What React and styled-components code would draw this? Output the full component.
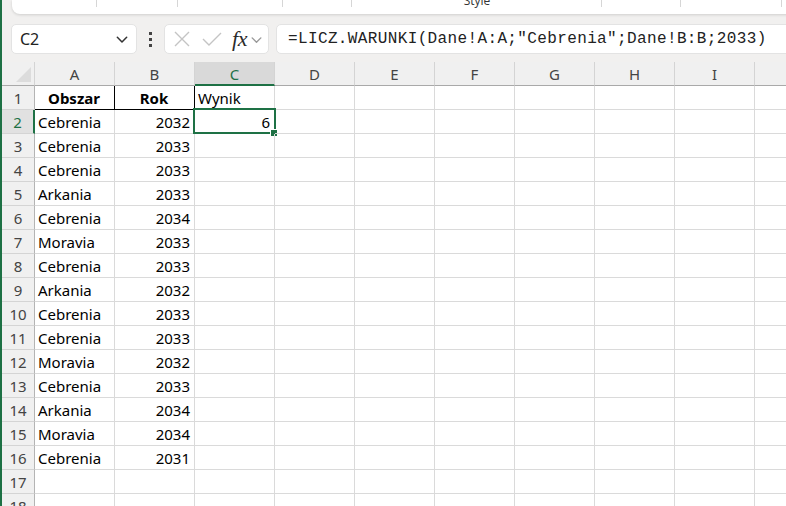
import { createGlobalStyle } from "styled-components"
import styled from "styled-components"

var GlobalStyle = createGlobalStyle`
    html, body {
        margin: 0;
        padding: 0;
        background: #f1f0ef;
        overflow: hidden;
    }
    * {
        box-sizing: border-box;
    }
`

var Window = styled.div`
    width: 786px;
    height: 506px;
    border-left: 2px solid #1e7145;
    display: flex;
    flex-direction: column;
    overflow: hidden;
    font-family: "Noto Sans", "Open Sans", sans-serif;
    & > * {
        flex-shrink: 0;
    }
`

var Ribbon = styled.div`
    height: 14px;
    margin-left: 10px;
    margin-right: -20px;
    background: #ffffff;
    border-bottom-left-radius: 8px;
    box-shadow: 0 1px 3px rgba(0, 0, 0, 0.14);
    display: flex;
    overflow: hidden;
`

var RibbonGroup = styled.div`
    position: relative;
    width: ${(props) => props.w}px;
    flex-shrink: 0;
    display: flex;
    justify-content: center;
    &::after {
        content: "";
        position: absolute;
        right: 0;
        top: 0;
        height: 7px;
        width: 1px;
        background: #d6d6d6;
    }
`

var RibbonLabel = styled.span`
    font-family: "Open Sans", "Noto Sans", sans-serif;
    font-size: 12px;
    line-height: 12px;
    margin-top: -5px;
    color: #333;
`

var FormulaRow = styled.div`
    display: flex;
    align-items: center;
    height: 30px;
    margin-top: 10px;
    margin-bottom: 8px;
    padding-left: 9px;
`

var Box = styled.div`
    height: 30px;
    background: #ffffff;
    border: 1px solid #e3e3e3;
    border-radius: 5px;
    display: flex;
    align-items: center;
    flex-shrink: 0;
`

var NameBox = styled(Box)`
    width: 126px;
    padding: 0 7px 0 8px;
    justify-content: space-between;
    font-family: "Noto Sans", sans-serif;
    font-size: 16px;
    color: #222;
`

var Dots = styled.div`
    width: 27px;
    display: flex;
    flex-direction: column;
    align-items: center;
    gap: 3px;
    span {
        width: 3px;
        height: 3px;
        background: #444;
    }
`

var FxBox = styled(Box)`
    width: 105px;
    padding: 0 3px 0 6px;
`

var FxLabel = styled.span`
    margin-left: 7px;
    font-family: "Liberation Serif", "DejaVu Serif", serif;
    font-style: italic;
    font-weight: 400;
    font-size: 22px;
    line-height: 22px;
    color: #2b2b2b;
    letter-spacing: -0.3px;
`

var IconSlot = styled.span`
    display: flex;
    margin-left: ${(props) => props.gap || 0}px;
`

var FormulaBox = styled(Box)`
    flex: 1;
    margin-left: 7px;
    margin-right: -12px;
    padding-left: 11px;
    font-family: "Liberation Mono", "DejaVu Sans Mono", monospace;
    font-size: 16px;
    letter-spacing: 0.37px;
    color: #222;
    white-space: nowrap;
`

var Grid = styled.div`
    display: grid;
    grid-template-columns: 33px repeat(10, 80px);
    grid-auto-rows: 24px;
    background: #ffffff;
    font-family: "Noto Sans", "Open Sans", sans-serif;
`

var ColHead = styled.div`
    background: ${(props) => (props.sel ? "#d9d9d9" : "#f0f0f0")};
    border-right: 1px solid #d4d4d4;
    border-bottom: ${(props) => (props.sel ? "2px solid #1e7145" : "1px solid #a9a9a9")};
    color: ${(props) => (props.sel ? "#1e7145" : "#444")};
    font-size: 15px;
    display: flex;
    align-items: center;
    justify-content: center;
    padding-top: ${(props) => (props.sel ? "1px" : "0")};
`

var Corner = styled.div`
    background: #f0f0f0;
    border-right: 1px solid #d4d4d4;
    border-bottom: 1px solid #a9a9a9;
    display: flex;
    align-items: flex-end;
    justify-content: flex-end;
    padding: 0 3px 3px 0;
`

var RowHead = styled.div`
    background: ${(props) => (props.sel ? "#e1e1e1" : "#f0f0f0")};
    border-right: ${(props) => (props.sel ? "2px solid #1e7145" : "1px solid #b4b4b4")};
    border-bottom: 1px solid #d4d4d4;
    color: ${(props) => (props.sel ? "#1e7145" : "#444")};
    font-size: 15px;
    display: flex;
    align-items: center;
    justify-content: center;
`

var Cell = styled.div`
    position: relative;
    border-right: 1px solid ${(props) => (props.boxed ? "#000" : "#dadada")};
    border-bottom: 1px solid ${(props) => (props.boxed ? "#000" : "#dadada")};
    padding: 0 4px 0 3px;
    font-size: 15px;
    color: #000;
    font-weight: ${(props) => (props.bold ? 700 : 400)};
    display: flex;
    align-items: center;
    justify-content: ${(props) =>
      props.align === "right" ? "flex-end" : props.align === "center" ? "center" : "flex-start"};
    white-space: nowrap;
`

var Selection = styled.div`
    position: absolute;
    left: -2px;
    top: -2px;
    width: 83px;
    height: 26px;
    border: 2px solid #1e7145;
    pointer-events: none;
`

var FillHandle = styled.div`
    position: absolute;
    right: -4px;
    bottom: -5px;
    width: 8px;
    height: 8px;
    background: #1e7145;
    border: 1px solid #ffffff;
`

var cols = ["A", "B", "C", "D", "E", "F", "G", "H", "I", "J"]

var data = [
  ["Cebrenia", 2032],
  ["Cebrenia", 2033],
  ["Cebrenia", 2033],
  ["Arkania", 2033],
  ["Cebrenia", 2034],
  ["Moravia", 2033],
  ["Cebrenia", 2033],
  ["Arkania", 2032],
  ["Cebrenia", 2033],
  ["Cebrenia", 2033],
  ["Moravia", 2032],
  ["Cebrenia", 2033],
  ["Arkania", 2034],
  ["Moravia", 2034],
  ["Cebrenia", 2031],
]

var ribbonGroups = [85, 81, 105, 69, 250, 79, 101, 60]

function Chevron(props) {
  return (
    <svg width={props.size} height={props.size} viewBox="0 0 12 12" fill="none">
      <path d="M2 4.5 L6 8.5 L10 4.5" stroke={props.color} strokeWidth="1.3" strokeLinecap="round" strokeLinejoin="round" />
    </svg>
  )
}

function renderRow(r) {
  var row = r === 1 ? ["Obszar", "Rok", "Wynik"] : data[r - 2] || ["", ""]
  var cells = []
  for (var c = 0; c < cols.length; c++) {
    var key = r + "-" + c
    if (r === 1 && c < 2) {
      cells.push(
        <Cell key={key} boxed bold align="center">
          {row[c]}
        </Cell>
      )
    } else if (r === 1 && c === 2) {
      cells.push(<Cell key={key}>{row[2]}</Cell>)
    } else if (c === 0) {
      cells.push(<Cell key={key}>{row[0]}</Cell>)
    } else if (c === 1) {
      cells.push(
        <Cell key={key} align="right">
          {row[1]}
        </Cell>
      )
    } else if (r === 2 && c === 2) {
      cells.push(
        <Cell key={key} align="right">
          6
          <Selection>
            <FillHandle />
          </Selection>
        </Cell>
      )
    } else {
      cells.push(<Cell key={key} />)
    }
  }
  return [
    <RowHead key={"h" + r} sel={r === 2}>
      {r}
    </RowHead>,
    ...cells,
  ]
}

export default function App() {
  var rows = []
  for (var r = 1; r <= 18; r++) {
    rows.push(...renderRow(r))
  }

  return (
    <Window>
      <GlobalStyle />
      <Ribbon>
        {ribbonGroups.map((w, i) => (
          <RibbonGroup key={i} w={w}>
            {i === 4 && <RibbonLabel>Style</RibbonLabel>}
          </RibbonGroup>
        ))}
      </Ribbon>

      <FormulaRow>
        <NameBox>
          <span>C2</span>
          <Chevron size={14} color="#333" />
        </NameBox>
        <Dots>
          <span />
          <span />
          <span />
        </Dots>
        <FxBox>
          <svg width="22" height="22" viewBox="0 0 22 22" fill="none">
            <path d="M4 4 L18 18 M18 4 L4 18" stroke="#c4c4c4" strokeWidth="1.4" />
          </svg>
          <IconSlot gap={6}>
            <svg width="26" height="22" viewBox="0 0 26 22" fill="none">
              <path d="M4 11 L10 17 L22 5" stroke="#c4c4c4" strokeWidth="1.4" />
            </svg>
          </IconSlot>
          <FxLabel>fx</FxLabel>
          <IconSlot gap={3}>
            <Chevron size={13} color="#999" />
          </IconSlot>
        </FxBox>
        <FormulaBox>=LICZ.WARUNKI(Dane!A:A;"Cebrenia";Dane!B:B;2033)</FormulaBox>
      </FormulaRow>

      <Grid>
        <Corner>
          <svg width="15" height="15" viewBox="0 0 15 15">
            <path d="M15 0 L15 15 L0 15 Z" fill="#dcdcdc" />
          </svg>
        </Corner>
        {cols.map((c) => (
          <ColHead key={c} sel={c === "C"}>
            {c}
          </ColHead>
        ))}
        {rows}
      </Grid>
    </Window>
  )
}
